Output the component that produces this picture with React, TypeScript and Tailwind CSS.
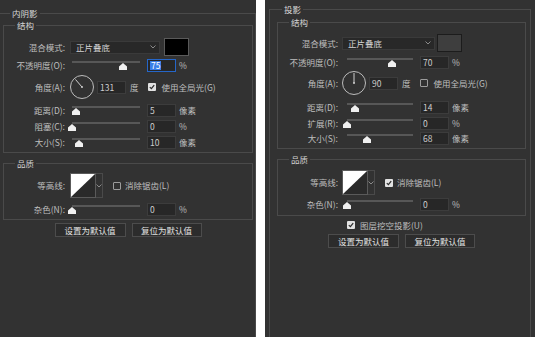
import React from 'react';

const LINE = 'border-[#4a4a4a]';

function Slider({ pct, w }: { pct: number; w: string }) {
  return (
    <div className={`relative h-[14px] shrink-0 ${w}`}>
      <div className="absolute left-0 right-0 top-[3px] h-[2px] bg-[#575757]" />
      <svg
        className="absolute top-[5px]"
        style={{ left: `calc(${pct}% - 4px)` }}
        width="8"
        height="7"
        viewBox="0 0 8 7"
      >
        <polygon points="4,0 8,3.5 8,7 0,7 0,3.5" fill="#f0f0f0" />
      </svg>
    </div>
  );
}

function Field({ value, active }: { value: string; active?: boolean }) {
  return (
    <div
      className={`w-[29px] h-[13px] shrink-0 flex items-center pl-[2px] bg-[#272727] border ${
        active ? 'border-[#2566c8]' : 'border-[#3c3c3c]'
      }`}
    >
      {active ? (
        <span className="bg-[#3a7ee8] text-white leading-[9px] px-px">{value}</span>
      ) : (
        <span className="text-[#cdcdcd]">{value}</span>
      )}
    </div>
  );
}

function Check({ on }: { on: boolean }) {
  return on ? (
    <span className="w-[8px] h-[8px] shrink-0 bg-[#e2e2e2] rounded-[1px] flex items-center justify-center">
      <svg width="6" height="6" viewBox="0 0 6 6">
        <path d="M0.8 3.1 L2.4 4.6 L5.2 1.2" stroke="#2e2e2e" strokeWidth="1.3" fill="none" />
      </svg>
    </span>
  ) : (
    <span className="w-[8px] h-[8px] shrink-0 border border-[#9c9c9c] rounded-[1px]" />
  );
}

function Dial({ angle }: { angle: number }) {
  const r = (angle * Math.PI) / 180;
  const x = 12 + Math.cos(r) * 10;
  const y = 12 - Math.sin(r) * 10;
  return (
    <svg width="24" height="24" viewBox="0 0 24 24" className="shrink-0">
      <circle cx="12" cy="12" r="11.5" stroke="#bcbcbc" fill="none" strokeWidth="1" />
      <line x1="12" y1="12" x2={x} y2={y} stroke="#cfcfcf" strokeWidth="1" />
      <circle cx="12" cy="12" r="1" fill="#cfcfcf" />
    </svg>
  );
}

function Chevron() {
  return (
    <svg width="6" height="4" viewBox="0 0 6 4">
      <path d="M0.5 0.5 L3 3 L5.5 0.5" stroke="#8a8a8a" fill="none" strokeWidth="1" />
    </svg>
  );
}

function Contour() {
  return (
    <div className="flex shrink-0 h-[25px]">
      <div className="w-[26px] h-[25px] border border-[#5a5a5a] bg-[#2a2a2a]">
        <svg width="24" height="23" viewBox="0 0 24 23" className="block">
          <polygon points="0,0 24,0 0,23" fill="#ffffff" />
        </svg>
      </div>
      <div className="w-[7px] h-[25px] border border-l-0 border-[#4a4a4a] flex items-center justify-center">
        <Chevron />
      </div>
    </div>
  );
}

type Row = { label: string; pct: number; value: string; unit: string; mt: string; active?: boolean };

type Cfg = {
  title: string;
  labelW: string;
  sliderGap: string;
  sliderW: string;
  fieldGap: string;
  selectGap: string;
  selectW: string;
  swatch: string;
  swatchGap: string;
  blendMt: string;
  opacity: Row;
  angle: number;
  angleValue: string;
  angleMt: string;
  globalLight: boolean;
  rows: Row[];
  structPb: string;
  qualityMt: string;
  contourMt: string;
  antiAlias: boolean;
  noise: Row;
  qualityPb: string;
  knockout: boolean;
  buttonsMt: string;
};

function SliderRow({ c, r }: { c: Cfg; r: Row }) {
  return (
    <div className={`flex items-center h-[14px] ${r.mt}`}>
      <div className={`${c.labelW} shrink-0 text-right`}>{r.label}</div>
      <div className={c.sliderGap} />
      <Slider pct={r.pct} w={c.sliderW} />
      <div className={c.fieldGap} />
      <Field value={r.value} active={r.active} />
      <span className="ml-[3px]">{r.unit}</span>
    </div>
  );
}

function Panel({ c }: { c: Cfg }) {
  return (
    <>
      <fieldset className={`border ${LINE} pb-[3px]`}>
        <legend className="ml-[11px] px-[2px] leading-[12px] text-[#d2d2d2]">结构</legend>
        <div className={`flex items-center h-[18px] ${c.blendMt}`}>
          <div className={`${c.labelW} shrink-0 text-right`}>混合模式:</div>
          <div
            className={`${c.selectGap} ${c.selectW} h-[13px] shrink-0 bg-[#282828] border border-[#3a3a3a] flex items-center justify-between pl-[5px] pr-[3px] text-[#d4d4d4]`}
          >
            <span>正片叠底</span>
            <Chevron />
          </div>
          <div className={`${c.swatchGap} ${c.swatch} w-[25px] h-[18px] shrink-0 border`} />
        </div>
        <SliderRow c={c} r={c.opacity} />
        <div className={`flex items-center h-[24px] ${c.angleMt}`}>
          <div className={`${c.labelW} shrink-0 text-right`}>角度(A):</div>
          <div className={c.selectGap} />
          <Dial angle={c.angle} />
          <div className="w-[3px]" />
          <Field value={c.angleValue} />
          <span className="ml-[4px]">度</span>
          <div className="ml-[9px] flex items-center">
            <Check on={c.globalLight} />
            <span className="ml-[6px]">使用全局光(G)</span>
          </div>
        </div>
        {c.rows.map((r) => (
          <SliderRow key={r.label} c={c} r={r} />
        ))}
      </fieldset>

      <fieldset className={`border ${LINE} ${c.qualityMt} ${c.qualityPb}`}>
        <legend className="ml-[11px] px-[2px] leading-[12px] text-[#d2d2d2]">品质</legend>
        <div className={`flex items-center h-[25px] ${c.contourMt}`}>
          <div className={`${c.labelW} shrink-0 text-right`}>等高线:</div>
          <div className={c.selectGap} />
          <Contour />
          <div className="ml-[10px] flex items-center">
            <Check on={c.antiAlias} />
            <span className="ml-[4px]">消除锯齿(L)</span>
          </div>
        </div>
        <SliderRow c={c} r={c.noise} />
      </fieldset>

      {c.knockout && (
        <div className="flex items-center h-[12px] mt-[3px] pl-[70px]">
          <Check on />
          <span className="ml-[5px]">图层挖空投影(U)</span>
        </div>
      )}

      <div className={`flex justify-center gap-[6px] ${c.buttonsMt}`}>
        <div className="w-[71px] h-[14px] border border-[#4c4c4c] bg-[#2c2c2c] flex items-center justify-center text-[#e2e2e2]">
          设置为默认值
        </div>
        <div className="w-[70px] h-[14px] border border-[#4c4c4c] bg-[#2c2c2c] flex items-center justify-center text-[#e2e2e2]">
          复位为默认值
        </div>
      </div>
    </>
  );
}

const innerShadow: Cfg = {
  title: '内阴影',
  labelW: 'w-[61px]',
  sliderGap: 'w-[7px]',
  sliderW: 'w-[68px]',
  fieldGap: 'w-[7px]',
  selectGap: 'ml-[5px]',
  selectW: 'w-[90px]',
  swatch: 'bg-black border-[#5a5a5a]',
  swatchGap: 'ml-[4px]',
  blendMt: 'mt-[7px]',
  opacity: { label: '不透明度(O):', pct: 75, value: '75', unit: '%', mt: 'mt-[2px]', active: true },
  angle: 131,
  angleValue: '131',
  angleMt: 'mt-[3px]',
  globalLight: true,
  rows: [
    { label: '距离(D):', pct: 6, value: '5', unit: '像素', mt: 'mt-[4px]' },
    { label: '阻塞(C):', pct: 0, value: '0', unit: '%', mt: 'mt-[2px]' },
    { label: '大小(S):', pct: 10, value: '10', unit: '像素', mt: 'mt-[2px]' },
  ],
  structPb: 'pb-[3px]',
  qualityMt: 'mt-[4px]',
  contourMt: 'mt-[4px]',
  antiAlias: false,
  noise: { label: '杂色(N):', pct: 0, value: '0', unit: '%', mt: 'mt-[4px]' },
  qualityPb: 'pb-[3px]',
  knockout: false,
  buttonsMt: 'mt-[3px]',
};

const dropShadow: Cfg = {
  title: '投影',
  labelW: 'w-[60px]',
  sliderGap: 'w-[9px]',
  sliderW: 'w-[66px]',
  fieldGap: 'w-[7px]',
  selectGap: 'ml-[4px]',
  selectW: 'w-[93px]',
  swatch: 'bg-[#3e3e3e] border-[#1c1c1c]',
  swatchGap: 'ml-[2px]',
  blendMt: 'mt-[6px]',
  opacity: { label: '不透明度(O):', pct: 68, value: '70', unit: '%', mt: 'mt-[3px]' },
  angle: 90,
  angleValue: '90',
  angleMt: 'mt-[2px]',
  globalLight: false,
  rows: [
    { label: '距离(D):', pct: 12, value: '14', unit: '像素', mt: 'mt-[5px]' },
    { label: '扩展(R):', pct: 0, value: '0', unit: '%', mt: 'mt-[2px]' },
    { label: '大小(S):', pct: 30, value: '68', unit: '像素', mt: 'mt-[1px]' },
  ],
  structPb: 'pb-[4px]',
  qualityMt: 'mt-[4px]',
  contourMt: 'mt-[5px]',
  antiAlias: true,
  noise: { label: '杂色(N):', pct: 0, value: '0', unit: '%', mt: 'mt-[2px]' },
  qualityPb: 'pb-[4px]',
  knockout: true,
  buttonsMt: 'mt-[3px]',
};

export default function App() {
  return (
    <div className="w-[538px] h-[337px] bg-white flex overflow-hidden font-['Noto_Sans_CJK_SC','Noto_Sans',sans-serif] text-[8.5px] text-[#bfbfbf] leading-none">
      <div className="w-[256px] h-full bg-[#323232] pt-[7px] overflow-hidden">
        <fieldset className={`-ml-px h-[336px] border ${LINE} pl-[3px] pr-[2px]`}>
          <legend className="ml-[7px] px-[2px] leading-[12px] text-[#d8d8d8]">内阴影</legend>
          <Panel c={innerShadow} />
        </fieldset>
      </div>
      <div className="w-[9px]" />
      <div className="w-[270px] h-full bg-[#323232] pt-[3px] pl-[4px] pr-[4px] overflow-hidden">
        <fieldset className={`h-[340px] border ${LINE} pl-[7px] pr-[4px]`}>
          <legend className="ml-[5px] px-[2px] leading-[12px] text-[#d8d8d8]">投影</legend>
          <div className="mt-[1px]">
            <Panel c={dropShadow} />
          </div>
        </fieldset>
      </div>
    </div>
  );
}
